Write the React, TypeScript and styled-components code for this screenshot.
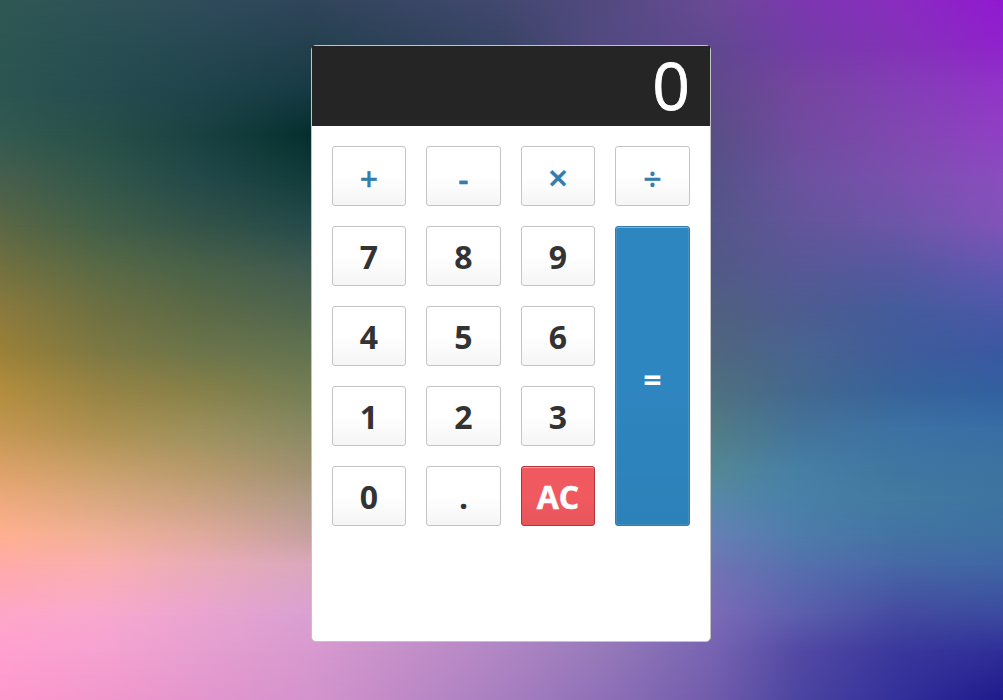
import React, { useState } from "react";
import styled, { createGlobalStyle, css } from "styled-components";

const GlobalStyle = createGlobalStyle`
  *, *::before, *::after { box-sizing: border-box; }
  html, body { margin: 0; padding: 0; overflow: hidden; }
  body { font-family: "Segoe UI", "Open Sans", "Noto Sans", sans-serif; }
`;

/* Colour mesh of the backdrop: one horizontal gradient per row of stops. */
const outerStops = [0, 100, 200, 311, 711, 800, 900, 1003];
const fullStops = [0, 100, 200, 311, 500, 600, 711, 800, 900, 1003];

const mesh: { y: number; colors: string }[] = [
  { y: 0, colors: "2f5853 2f5258 2f4c5a 30455a 434870 524a80 6a4a96 7c38b0 8a2cc0 9119d2" },
  { y: 45, colors: "2d5652 294f52 274853 24404f 384464 524a80 60488f 743ca8 8432b8 9022cc" },
  { y: 90, colors: "2c5550 264c50 1f444b 163a43 5e4a8a 75469f 823fb5 9235c8" },
  { y: 135, colors: "335a50 285048 1a4142 042f2d 584f85 704b9f 8048b0 9040c4" },
  { y: 180, colors: "475f4c 33574a 234949 123c3b 555288 6b529f 7a50ae 8a4ebe" },
  { y: 225, colors: "5b6745 425f48 345348 254a4a 545689 62559a 6c56a8 8054b8" },
  { y: 270, colors: "73713f 5a6a45 4a6248 405a50 525a86 565896 5558a0 6257b2" },
  { y: 310, colors: "8b7a3d 6e7042 5b6a46 50654f 506080 4d5c90 445c9c 4c58a8" },
  { y: 350, colors: "9a8038 7c7843 6b744a 617250 50667e 486490 405c9a 3b58a2" },
  { y: 390, colors: "b28d3e 968344 868049 737d54 4f707f 44688e 37639a 3260a0" },
  { y: 430, colors: "c39650 ac9050 9c905c 888962 527c85 44739a 3d72a4 386ea4" },
  { y: 470, colors: "dda168 c8a06a b79a6c a09172 548895 467fa6 3f76a0 3c74a0" },
  { y: 500, colors: "eeaa7c daa880 c9a282 b09b88 5888a8 4880a8 427aa0 3d74a0" },
  { y: 535, colors: "ffb090 f0b098 e0aa9c c6a0a0 6680b5 4e7caa 4373a3 3e70a2" },
  { y: 565, colors: "ffaaa8 fab0b0 eaacb8 dba8bd 7075b5 5570ae 4768a6 4066a4" },
  { y: 615, colors: "ffa6c8 f8a8ce eaa4d0 d9a0d2 7c6ab8 5c5eac 444aa0 3b4a9e" },
  { y: 650, colors: "ffa0d0 f6a2d0 e69fd0 d899cf b186c4 977aba 7764b2 5249a4 3a389c 302f98" },
  { y: 700, colors: "ff98cc f298cc e496cc d493cc a87fc0 8f70b8 715cac 4b44a0 32309a 1f1a8c" },
];

const rowGradient = (colors: string) => {
  const list = colors.split(" ");
  const stops = list.length === outerStops.length ? outerStops : fullStops;
  return `linear-gradient(to right, ${list.map((c, i) => `#${c} ${stops[i]}px`).join(", ")})`;
};

const Page = styled.div`
  display: grid;
  width: 1003px;
  height: 700px;
  overflow: hidden;
`;

const MeshRow = styled.div<{ $colors: string; $from: number; $to: number }>`
  grid-area: 1 / 1;
  background: ${({ $colors }) => rowGradient($colors)};
  ${({ $from, $to }) =>
    $to > 0 &&
    css`
      mask-image: linear-gradient(to bottom, transparent ${$from}px, #000 ${$to}px);
    `}
`;

const Calculator = styled.main`
  grid-area: 1 / 1;
  z-index: 1;
  width: 400px;
  height: 597px;
  margin: 45px 0 0 311px;
  border: 1px solid #c3c3c3;
  border-radius: 5px;
  background: #fff;
`;

const Display = styled.output`
  display: block;
  height: 80px;
  padding-right: 20px;
  background: #252525;
  color: #fff;
  font-size: 66px;
  line-height: 76px;
  text-align: right;
  -webkit-text-stroke: 0.8px #fff;
`;

const Keys = styled.div`
  display: grid;
  grid-template-columns: 74px 75px 74px 75px;
  grid-auto-rows: 60px;
  gap: 20px;
  padding: 20px;
`;

const Key = styled.button<{ $kind?: "operator" | "clear" | "equals" }>`
  margin: 0;
  padding: 2px 0 0;
  min-width: 0;
  border: 1px solid #c4c4c4;
  border-radius: 3px;
  background: transparent linear-gradient(to bottom, transparent, transparent 50%, rgba(0, 0, 0, 0.04));
  color: #333;
  font-family: inherit;
  font-size: 32px;
  font-weight: 700;
  line-height: 1;
  cursor: pointer;

  ${({ $kind }) =>
    $kind === "operator" &&
    css`
      padding-top: 5px;
      color: #337cac;
      font-weight: 600;
      -webkit-text-stroke: 0.3px #337cac;
    `}
  ${({ $kind }) =>
    $kind === "clear" &&
    css`
      border-color: #b0353a;
      background-color: #f0595f;
      box-shadow: inset 0 1px 0 rgba(255, 255, 255, 0.4);
      color: #fff;
      -webkit-text-stroke: 0.5px #fff;
    `}
  ${({ $kind }) =>
    $kind === "equals" &&
    css`
      grid-column: 4;
      grid-row: 2 / span 4;
      padding-top: 8px;
      border-color: #337cac;
      background-color: #2e86c0;
      box-shadow: inset 0 1px 0 rgba(255, 255, 255, 0.3), inset 0 0 0 1px rgba(255, 255, 255, 0.1);
      color: #fff;
    `}
`;

const TimesGlyph = styled.span`
  font-size: 36px;
  line-height: 32px;
`;

const operators = ["+", "-", "×", "÷"];
const digits = ["7", "8", "9", "4", "5", "6", "1", "2", "3", "0", "."];

export default function App() {
  const [value, setValue] = useState("0");
  const enter = (key: string) => setValue((v) => (v === "0" && key !== "." ? key : v + key));

  return (
    <>
      <GlobalStyle />
      <Page>
        {mesh.map((row, i) => (
          <MeshRow key={row.y} $colors={row.colors} $from={i ? mesh[i - 1].y : 0} $to={row.y} />
        ))}
        <Calculator>
          <Display>{value}</Display>
          <Keys>
            {operators.map((op) => (
              <Key key={op} $kind="operator">{op === "×" ? <TimesGlyph>{op}</TimesGlyph> : op}</Key>
            ))}
            {digits.map((d) => (
              <Key key={d} onClick={() => enter(d)}>{d}</Key>
            ))}
            <Key $kind="clear" onClick={() => setValue("0")}>AC</Key>
            <Key $kind="equals">=</Key>
          </Keys>
        </Calculator>
      </Page>
    </>
  );
}
